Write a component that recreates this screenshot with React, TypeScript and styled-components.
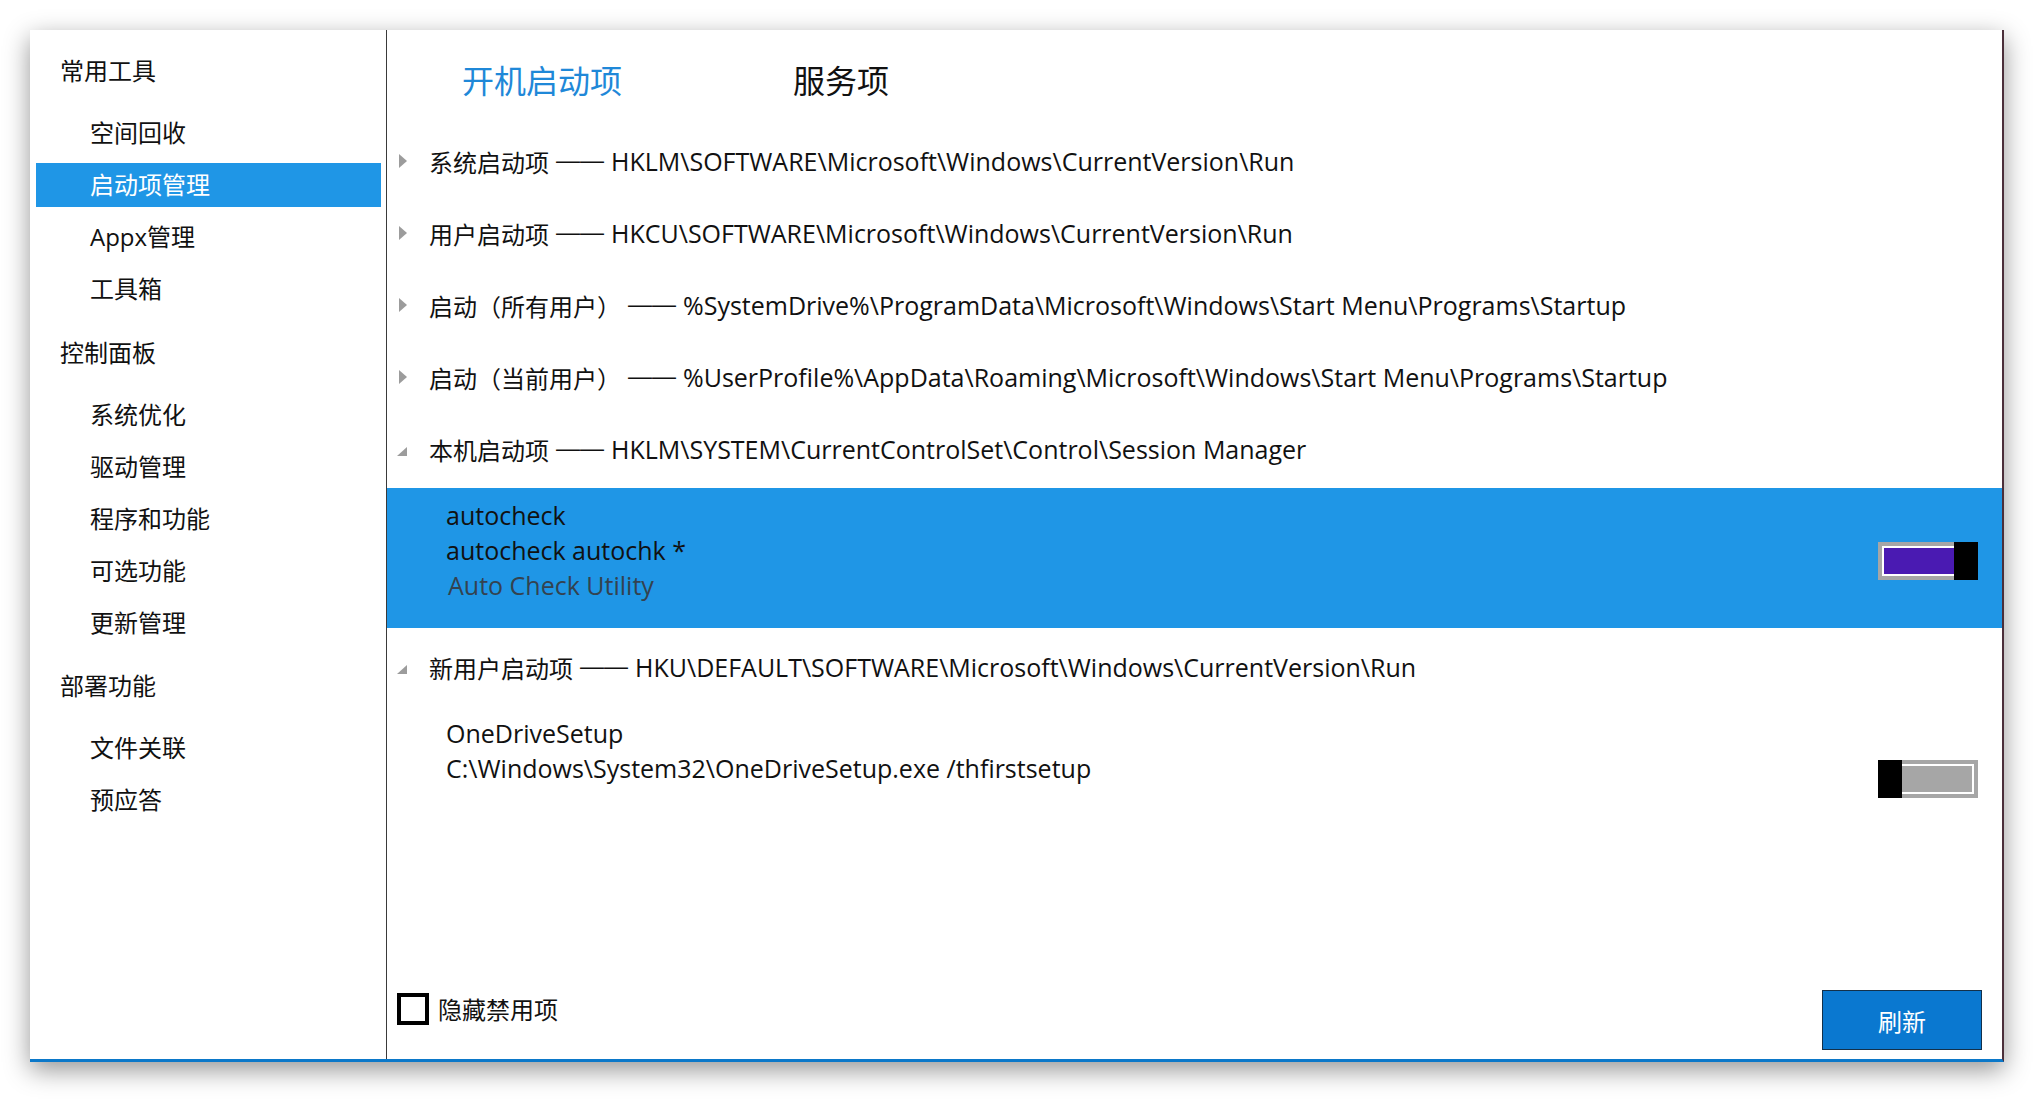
import React, { useState } from 'react';
import styled, { createGlobalStyle } from 'styled-components';

const GlobalStyle = createGlobalStyle`
  html, body {
    margin: 0;
    padding: 0;
    background: #ffffff;
  }
  body {
    font-family: "Open Sans", "Noto Sans CJK SC", sans-serif;
    color: #111111;
  }
`;

const Page = styled.div`
  width: 2034px;
  height: 1102px;
  padding: 30px 0 0 30px;
  box-sizing: border-box;
`;

const Window = styled.div`
  width: 1974px;
  height: 1032px;
  box-sizing: border-box;
  display: flex;
  background: #ffffff;
  border-right: 2px solid #4b2f3a;
  border-bottom: 3px solid #0b78c9;
  box-shadow: 0 8px 24px rgba(0, 0, 0, 0.42);
`;

const Sidebar = styled.nav`
  width: 357px;
  flex-shrink: 0;
  box-sizing: border-box;
  border-right: 1px solid #3a3a3a;
  padding-top: 17px;
  display: flex;
  flex-direction: column;
`;

const Group = styled.div`
  margin-bottom: 9.5px;
`;

const GroupTitle = styled.div`
  height: 48px;
  line-height: 48px;
  padding-left: 30px;
  font-size: 24px;
  margin-bottom: 16px;
`;

const NavItem = styled.div<{ $active?: boolean }>`
  height: 44px;
  line-height: 44px;
  margin: 0 5px 8px 6px;
  padding-left: 54px;
  font-size: 24px;
  background: ${(p) => (p.$active ? '#1f96e6' : 'transparent')};
  color: ${(p) => (p.$active ? '#ffffff' : '#111111')};
  cursor: default;
`;

const Main = styled.main`
  flex: 1;
  display: flex;
  flex-direction: column;
  min-width: 0;
`;

const TabBar = styled.div`
  display: flex;
  gap: 171px;
  padding: 25px 0 0 75px;
  margin-bottom: 22px;
`;

const Tab = styled.div<{ $active?: boolean }>`
  height: 48px;
  line-height: 48px;
  font-size: 32px;
  font-family: "Noto Sans CJK SC", sans-serif;
  color: ${(p) => (p.$active ? '#1f88d8' : '#111111')};
`;

const Row = styled.div`
  height: 72px;
  display: flex;
  align-items: center;
  padding-left: 12px;
  font-size: 24px;
  white-space: nowrap;
`;

const RegPath = styled.span`
  font-size: 25px;
`;

const CaretBox = styled.span`
  width: 30px;
  height: 20px;
  display: flex;
  align-items: center;
  flex-shrink: 0;
`;

const Caret = styled.span<{ $open?: boolean }>`
  width: 0;
  height: 0;
  ${(p) => (p.$open
    ? `
    margin: 5px 0 0 -2px;
    border-left: 10px solid transparent;
    border-bottom: 9px solid #9c9c9c;
  `
    : `
    border-top: 7px solid transparent;
    border-bottom: 7px solid transparent;
    border-left: 8px solid #9c9c9c;
  `)}
`;

const Dash = styled.span`
  font-family: "Liberation Sans", sans-serif;
  margin: 0 7px;
  position: relative;
  top: -1px;
`;

const Entry = styled.div<{ $selected?: boolean }>`
  height: 140px;
  display: flex;
  justify-content: space-between;
  align-items: flex-start;
  padding: 10px 24px 0 59px;
  box-sizing: border-box;
  background: ${(p) => (p.$selected ? '#1f96e6' : 'transparent')};
  margin: 3px 0;
`;

const EntryText = styled.div`
  display: flex;
  flex-direction: column;
  font-size: 25px;
  line-height: 35px;
`;

const EntryDesc = styled.span`
  color: #34424f;
  padding-left: 2px;
`;

const Toggle = styled.button<{ $on: boolean }>`
  position: relative;
  width: 100px;
  height: 38px;
  margin-top: 44px;
  padding: 0;
  box-sizing: border-box;
  border: 4px solid #a6a6a6;
  outline: 2px solid #ffffff;
  outline-offset: -6px;
  background: ${(p) => (p.$on ? '#4a1ab2' : '#a6a6a6')};
  cursor: pointer;
  flex-shrink: 0;
  &::after {
    content: '';
    position: absolute;
    top: -4px;
    bottom: -4px;
    width: 24px;
    background: #000000;
    ${(p) => (p.$on ? 'right: -4px;' : 'left: -4px;')}
  }
`;

const Footer = styled.div`
  margin-top: auto;
  display: flex;
  justify-content: space-between;
  align-items: flex-end;
  padding: 0 20px 9px 10px;
`;

const CheckLabel = styled.label`
  display: flex;
  align-items: center;
  gap: 9px;
  font-size: 24px;
  margin-bottom: 24px;
  cursor: pointer;
`;

const CheckBox = styled.span<{ $checked: boolean }>`
  width: 32px;
  height: 32px;
  box-sizing: border-box;
  border: 4px solid #000000;
  background: ${(p) => (p.$checked ? '#000000' : '#ffffff')};
  box-shadow: ${(p) => (p.$checked ? 'inset 0 0 0 3px #ffffff' : 'none')};
`;

const RefreshButton = styled.button`
  width: 160px;
  height: 60px;
  background: #0a78d0;
  border: 1px solid #13304a;
  color: #ffffff;
  font-family: inherit;
  font-size: 24px;
  cursor: pointer;
`;

const navGroups = [
  { title: '常用工具', items: ['空间回收', '启动项管理', 'Appx管理', '工具箱'] },
  { title: '控制面板', items: ['系统优化', '驱动管理', '程序和功能', '可选功能', '更新管理'] },
  { title: '部署功能', items: ['文件关联', '预应答'] },
];

const collapsedRows = [
  ['系统启动项', 'HKLM\\SOFTWARE\\Microsoft\\Windows\\CurrentVersion\\Run'],
  ['用户启动项', 'HKCU\\SOFTWARE\\Microsoft\\Windows\\CurrentVersion\\Run'],
  ['启动（所有用户）', '%SystemDrive%\\ProgramData\\Microsoft\\Windows\\Start Menu\\Programs\\Startup'],
  ['启动（当前用户）', '%UserProfile%\\AppData\\Roaming\\Microsoft\\Windows\\Start Menu\\Programs\\Startup'],
];

export default function App() {
  const [autocheckOn, setAutocheckOn] = useState(true);
  const [oneDriveOn, setOneDriveOn] = useState(false);
  const [hideDisabled, setHideDisabled] = useState(false);

  return (
    <Page>
      <GlobalStyle />
      <Window>
        <Sidebar>
          {navGroups.map((g) => (
            <Group key={g.title}>
              <GroupTitle>{g.title}</GroupTitle>
              {g.items.map((item) => (
                <NavItem key={item} $active={item === '启动项管理'}>{item}</NavItem>
              ))}
            </Group>
          ))}
        </Sidebar>
        <Main>
          <TabBar>
            <Tab $active>开机启动项</Tab>
            <Tab>服务项</Tab>
          </TabBar>
          {collapsedRows.map(([name, path]) => (
            <Row key={name}>
              <CaretBox><Caret /></CaretBox>
              {name}
              <Dash>——</Dash>
              <RegPath>{path}</RegPath>
            </Row>
          ))}
          <Row>
            <CaretBox><Caret $open /></CaretBox>
            本机启动项
            <Dash>——</Dash>
            <RegPath>HKLM\SYSTEM\CurrentControlSet\Control\Session Manager</RegPath>
          </Row>
          <Entry $selected>
            <EntryText>
              <span>autocheck</span>
              <span>autocheck autochk *</span>
              <EntryDesc>Auto Check Utility</EntryDesc>
            </EntryText>
            <Toggle $on={autocheckOn} onClick={() => { setAutocheckOn(!autocheckOn); }} />
          </Entry>
          <Row>
            <CaretBox><Caret $open /></CaretBox>
            新用户启动项
            <Dash>——</Dash>
            <RegPath>HKU\DEFAULT\SOFTWARE\Microsoft\Windows\CurrentVersion\Run</RegPath>
          </Row>
          <Entry>
            <EntryText>
              <span>OneDriveSetup</span>
              <span>C:\Windows\System32\OneDriveSetup.exe /thfirstsetup</span>
            </EntryText>
            <Toggle $on={oneDriveOn} onClick={() => { setOneDriveOn(!oneDriveOn); }} />
          </Entry>
          <Footer>
            <CheckLabel onClick={() => { setHideDisabled(!hideDisabled); }}>
              <CheckBox $checked={hideDisabled} />
              隐藏禁用项
            </CheckLabel>
            <RefreshButton type='button'>刷新</RefreshButton>
          </Footer>
        </Main>
      </Window>
    </Page>
  );
}
